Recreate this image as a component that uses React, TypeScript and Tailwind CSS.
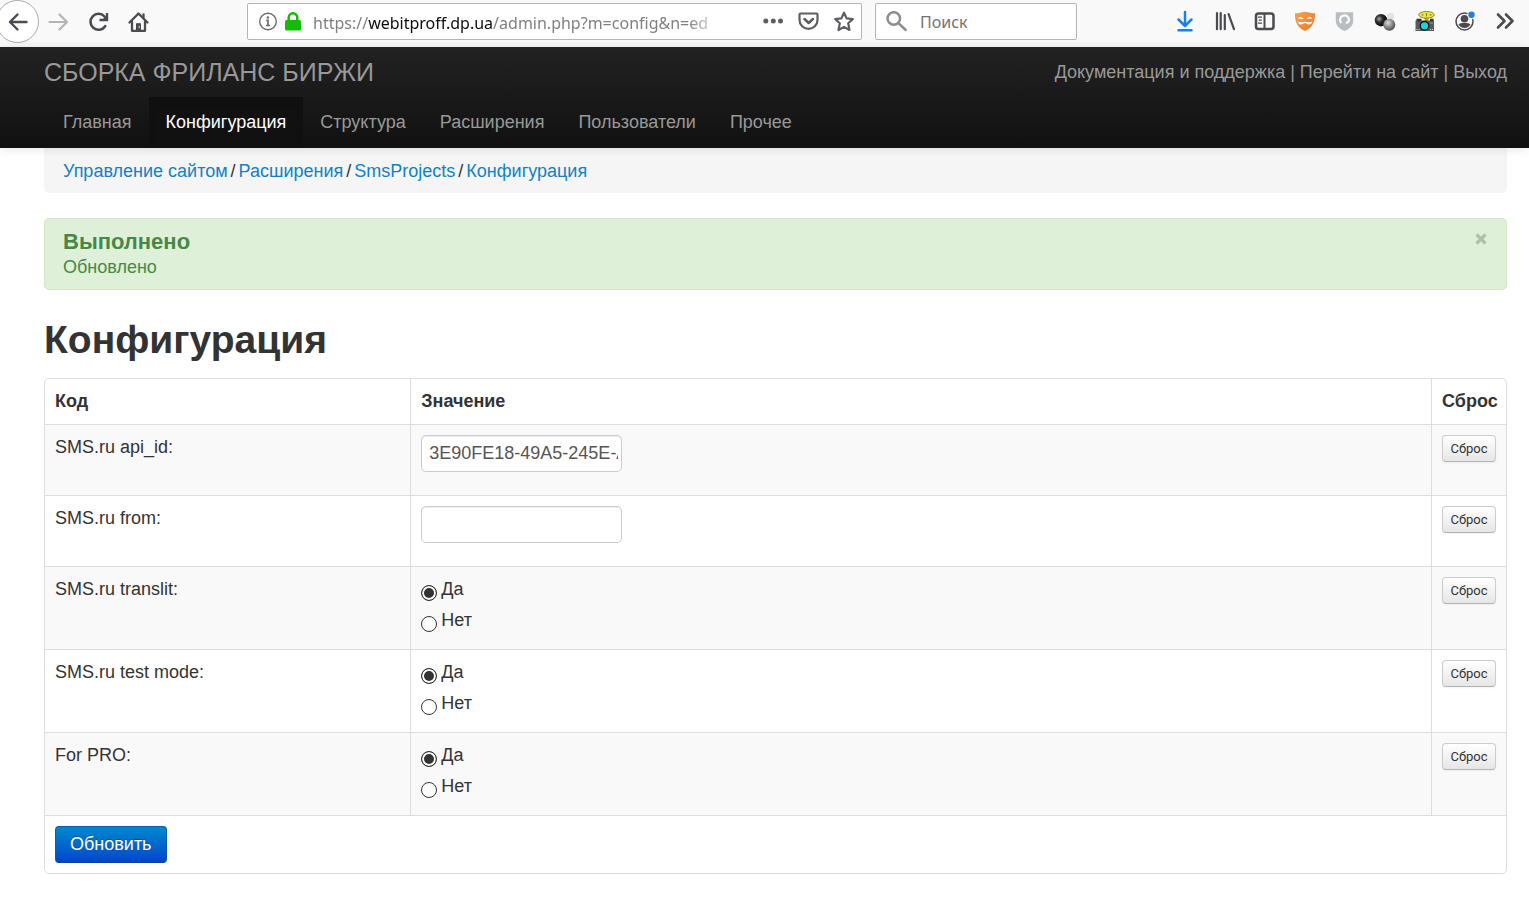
import React from "react";

const iconBox = "block size-6 shrink-0";

function NavButton({ label, children, className = "" }: { label: string; children: React.ReactNode; className?: string }) {
  return (
    <button type="button" aria-label={label} className={`flex size-10 shrink-0 items-center justify-center ${className}`}>
      {children}
    </button>
  );
}

function BackIcon() {
  return (
    <svg viewBox="0 0 24 24" className={iconBox} fill="none" stroke="#4a4a4f" strokeWidth="2.4" strokeLinecap="round" strokeLinejoin="round">
      <path d="M20.500 12H4M11.500 4.500 4 12l7.500 7.500" />
    </svg>
  );
}

function ForwardIcon() {
  return (
    <svg viewBox="0 0 24 24" className={iconBox} fill="none" stroke="#b4b4b6" strokeWidth="2.2" strokeLinecap="round" strokeLinejoin="round">
      <path d="M2.500 12h17M12.500 4.500l7.500 7.500-7.500 7.500" />
    </svg>
  );
}

function ReloadIcon() {
  return (
    <svg viewBox="0 0 24 24" className={iconBox} fill="none" stroke="#4a4a4f" strokeWidth="2.600">
      <path d="M18.200 16.200A8 8 0 1 1 17.500 6.500" strokeLinecap="round" />
      <path d="M20 3v7h-7.500" strokeWidth="2.400" />
      <path d="M20 5v5h-5z" fill="#4a4a4f" stroke="none" />
    </svg>
  );
}

function HomeIcon() {
  return (
    <svg viewBox="0 0 24 24" className={iconBox} fill="none" stroke="#4a4a4f" strokeLinecap="round" strokeLinejoin="round">
      <path d="M2.500 12.500 11.500 3.500l9 9" strokeWidth="2.300" />
      <path d="M5 11.500v9.300h13v-9.300" strokeWidth="2.300" />
      <path d="M16.500 4.500v3" strokeWidth="2.300" />
      <path d="M9.500 20.500v-6.800h4v6.800z" fill="#4a4a4f" strokeWidth="1" />
      <path d="M12.200 16.200v1.600" stroke="#ddd" strokeWidth="1" />
    </svg>
  );
}

function InfoIcon() {
  return (
    <svg viewBox="0 0 20 20" className="block size-5" fill="none" stroke="#6b6b6e">
      <circle cx="10" cy="9.500" r="8.300" strokeWidth="1.400" />
      <path d="M8.200 8.300H10v5M8 13.500h4.200" strokeWidth="1.700" />
      <circle cx="9.900" cy="5.500" r="1.200" fill="#6b6b6e" stroke="none" />
    </svg>
  );
}

function LockIcon() {
  return (
    <svg viewBox="0 0 18 20" className="block h-5 w-[18px]">
      <path d="M4.700 10V5.600a4.300 4.300 0 0 1 8.600 0V10" fill="none" stroke="#12bc00" strokeWidth="2.500" />
      <rect x="1" y="8" width="16" height="10.500" rx="1.500" fill="#12bc00" />
    </svg>
  );
}

function DotsIcon() {
  return (
    <svg viewBox="0 0 20 20" className="block size-5" fill="#5f5f63">
      <circle cx="2.800" cy="9" r="2.500" />
      <circle cx="10.300" cy="9" r="2.500" />
      <circle cx="17.500" cy="9" r="2.500" />
    </svg>
  );
}

function PocketIcon() {
  return (
    <svg viewBox="0 0 22 20" className="block h-5 w-[22px]" fill="none" stroke="#5f5f63" strokeWidth="2.200" strokeLinecap="round" strokeLinejoin="round">
      <path d="M3.500 1.500h16a1 1 0 0 1 1 1v5.500a9 8.800 0 0 1-18 0V2.500a1 1 0 0 1 1-1z" />
      <path d="m7.500 7 4.200 4 4.200-4" strokeWidth="2.500" />
    </svg>
  );
}

function StarIcon() {
  return (
    <svg viewBox="0 0 22 22" className="block size-[22px]" fill="none" stroke="#5f5f63" strokeWidth="2.200" strokeLinejoin="round">
      <path d="m11 1.700 2.600 5.700 6.200.7-4.600 4.200 1.300 6.700L11 15.900l-5.500 3.100 1.300-6.700L2.200 8.100l6.200-.7z" />
    </svg>
  );
}

function SearchIcon() {
  return (
    <svg viewBox="0 0 22 22" className="block size-[22px] shrink-0" fill="none" stroke="#8d8d8f" strokeWidth="2.500" strokeLinecap="round">
      <circle cx="7.800" cy="7.500" r="6.300" />
      <path d="m12.700 12.300 7 6.700" />
    </svg>
  );
}

function DownloadIcon() {
  return (
    <svg viewBox="0 0 24 24" className={iconBox} fill="none" stroke="#1583e9" strokeWidth="2.500" strokeLinecap="round" strokeLinejoin="round">
      <path d="M12 3v13.500M5.500 10.500 12 17l6.500-6.500M5.500 21.300h13" />
    </svg>
  );
}

function LibraryIcon() {
  return (
    <svg viewBox="0 0 24 24" className={iconBox} fill="none" stroke="#4a4a4f" strokeWidth="2.200" strokeLinecap="round">
      <path d="M4 4.200v16M7.700 4.200v16M11.800 6.200v14M15.600 5.200l5.400 15" />
    </svg>
  );
}

function SidebarIcon() {
  return (
    <svg viewBox="0 0 24 24" className={iconBox} fill="none" stroke="#4a4a4f" strokeWidth="2.500">
      <rect x="3" y="4.500" width="17.500" height="15.500" rx="2.500" />
      <path d="M11.500 4.500v15.500" strokeWidth="2" />
      <path d="M5 8.200h4M5.800 11.200h3M5 14.200h4" strokeWidth="1.200" />
    </svg>
  );
}

function FoxMaskIcon() {
  return (
    <svg viewBox="0 0 24 24" className={iconBox}>
      <defs>
        <linearGradient id="maskFill" x1="0" y1="0" x2="1" y2="1">
          <stop offset="0" stopColor="#f6a44f" />
          <stop offset="1" stopColor="#e8792e" />
        </linearGradient>
      </defs>
      <path d="M2 4c4 .8 6.500-1.200 10-1.200S18 4.800 22 4c.500 9-3 15.200-10 18C5 19.200 1.500 13 2 4z" fill="url(#maskFill)" />
      <path d="M4.800 9.800c.8-2.600 4.200-2.600 5.700.5-2-.9-3.900-1-5.700-.5zM19.200 9.800c-.8-2.600-4.200-2.600-5.700.5 2-.9 3.900-1 5.700-.5z" fill="#fff" />
      <path d="M4.500 12c1.600 1.900 4.300 1.500 7.500.7 3.200.8 5.900 1.200 7.500-.7-.5 3.200-3.500 4.500-5.700 2.700l-1.800-.8-1.800.8C8 16.500 5 15.200 4.500 12z" fill="#fff" />
    </svg>
  );
}

function ShieldIcon() {
  return (
    <svg viewBox="0 0 24 24" className={iconBox}>
      <path d="M2.800 3.200h17.400V12c0 4.500-4.200 8.500-8.700 10-4.500-1.500-8.700-5.500-8.700-10z" fill="#b9bcc3" />
      <path d="M8.300 14a4.500 4.500 0 1 1 7.700-3.200c0 1.800-1.200 3-3.200 2.800" fill="none" stroke="#fff" strokeWidth="2.200" />
    </svg>
  );
}

function SpheresIcon() {
  return (
    <svg viewBox="0 0 24 24" className={iconBox}>
      <defs>
        <radialGradient id="sphereDark" cx="0.350" cy="0.400" r="0.650">
          <stop offset="0" stopColor="#aaa" />
          <stop offset="0.400" stopColor="#333" />
          <stop offset="1" stopColor="#000" />
        </radialGradient>
        <radialGradient id="sphereGrey" cx="0.400" cy="0.350" r="0.700">
          <stop offset="0" stopColor="#ddd" />
          <stop offset="0.500" stopColor="#8d8d8d" />
          <stop offset="1" stopColor="#444" />
        </radialGradient>
      </defs>
      <circle cx="17.500" cy="7.500" r="3.800" fill="#e3e3e3" />
      <circle cx="8" cy="11.200" r="6.200" fill="url(#sphereDark)" />
      <circle cx="16.300" cy="15.700" r="6" fill="url(#sphereGrey)" />
    </svg>
  );
}

function CameraIcon() {
  return (
    <svg viewBox="0 0 24 24" className={iconBox}>
      <path d="M11 8h5l-1 4h-3z" fill="#c9a400" />
      <rect x="2.500" y="11.500" width="18.500" height="10.500" fill="#565b5e" />
      <path d="M3.500 9.800h5v2.500h-5zM17 9.800h3.500v2.500H17z" fill="#333" />
      <ellipse cx="13.500" cy="5.800" rx="7.800" ry="3.300" fill="#eee94a" stroke="#8b8720" strokeWidth="1" />
      <path d="M8.500 5.800h2M16.500 5.800h2M13.500 4v3.500" stroke="#8b8720" strokeWidth="1.200" />
      <circle cx="11.500" cy="16.800" r="4.300" fill="#19d7d8" stroke="#111" strokeWidth="1.300" />
      <path d="M3.500 20.500h3M17 20.500h3M17.500 14h2.500" stroke="#ddd" strokeWidth="1" strokeDasharray="1 1" />
    </svg>
  );
}

function AccountIcon() {
  return (
    <svg viewBox="0 0 24 24" className={iconBox}>
      <circle cx="11.500" cy="12.500" r="8.500" fill="none" stroke="#4a4a4f" strokeWidth="1.500" />
      <circle cx="11.500" cy="9.800" r="3.800" fill="#4a4a4f" />
      <path d="M5.500 15.500c1-1.500 3-1.500 6-1.500s5 0 6 1.500c-1.500 2.500-3.800 3.500-6 3.500s-4.500-1-6-3.500z" fill="#4a4a4f" />
      <circle cx="18.500" cy="5.700" r="4.200" fill="#f9f9fa" />
      <circle cx="18.500" cy="5.700" r="3.200" fill="#2080e0" />
    </svg>
  );
}

function ChevronsIcon() {
  return (
    <svg viewBox="0 0 24 24" className={iconBox} fill="none" stroke="#4a4a4f" strokeWidth="2.600" strokeLinecap="round" strokeLinejoin="round">
      <path d="m5 5.500 6.500 6.500L5 18.500M13 5.500l6.500 6.500-6.500 6.500" />
    </svg>
  );
}

const extensions = [
  { label: "Загрузки", Icon: DownloadIcon },
  { label: "Библиотека", Icon: LibraryIcon },
  { label: "Боковые панели", Icon: SidebarIcon },
  { label: "Маска", Icon: FoxMaskIcon },
  { label: "Защита", Icon: ShieldIcon },
  { label: "Сферы", Icon: SpheresIcon },
  { label: "Снимок экрана", Icon: CameraIcon },
  { label: "Аккаунт", Icon: AccountIcon },
  { label: "Другие инструменты", Icon: ChevronsIcon },
];

function BrowserBar() {
  return (
    <div className="flex h-[47px] items-start bg-[#f9f9fa] pr-1 font-['Noto_Sans',sans-serif]">
      <div className="-ml-1 flex h-[43px] w-[251px] shrink-0 items-center">
        <NavButton label="Назад" className="size-[43px] rounded-full border border-[#a9a9ab] bg-white">
          <BackIcon />
        </NavButton>
        <NavButton label="Вперёд"><ForwardIcon /></NavButton>
        <NavButton label="Обновить страницу"><ReloadIcon /></NavButton>
        <NavButton label="Домой"><HomeIcon /></NavButton>
      </div>
      <div className="mt-[3px] flex h-[37px] w-[615px] items-center rounded-xs border border-[#b5b5b7] bg-white pr-1.5 pl-2.5">
        <InfoIcon />
        <span className="ml-1.5"><LockIcon /></span>
        <div className="ml-[11px] flex-1 overflow-hidden pt-0.5 text-base whitespace-nowrap text-[#808082] [mask-image:linear-gradient(to_right,black_375px,transparent_410px)]">
          https://<span className="text-[#0c0c0d]">webitproff.dp.ua</span>/admin.php?m=config&amp;n=ed
        </div>
        <div className="ml-4 flex shrink-0 items-center gap-3.5">
          <button type="button" aria-label="Действия"><DotsIcon /></button>
          <button type="button" aria-label="Сохранить в Pocket"><PocketIcon /></button>
          <button type="button" aria-label="Добавить в закладки"><StarIcon /></button>
        </div>
      </div>
      <label className="mt-[3px] ml-[13px] flex h-[37px] w-[202px] items-center gap-3 rounded-xs border border-[#b5b5b7] bg-white px-2.5">
        <SearchIcon />
        <input type="search" aria-label="Поиск" placeholder="Поиск" className="w-full min-w-0 text-base outline-none placeholder:text-[#737373]" />
      </label>
      <div className="ml-auto flex h-[42px] items-center">
        {extensions.map(({ label, Icon }) => (
          <NavButton key={label} label={label}><Icon /></NavButton>
        ))}
      </div>
    </div>
  );
}

const menu = ["Главная", "Конфигурация", "Структура", "Расширения", "Пользователи", "Прочее"];

function SiteHeader() {
  return (
    <header className="relative h-[101px] bg-linear-to-b from-[#222] to-[#111] pr-[22px] pl-[44px] text-[#999] shadow-[0_1px_10px_rgba(0,0,0,0.1)]">
      <div className="flex h-[50px] items-center justify-between">
        <a href="#" className="text-[25px] [text-shadow:0_-1px_0_rgba(0,0,0,0.25)]">СБОРКА ФРИЛАНС БИРЖИ</a>
        <p>
          <a href="#">Документация и поддержка</a> | <a href="#">Перейти на сайт</a> | <a href="#">Выход</a>
        </p>
      </div>
      <nav className="flex h-[51px] pl-0.5">
        {menu.map((item) => (
          <a
            key={item}
            href="#"
            className={
              item === "Конфигурация"
                ? "flex items-center bg-[#111] px-[17px] text-white shadow-[inset_0_3px_8px_rgba(0,0,0,0.125)]"
                : "flex items-center px-[17px]"
            }
          >
            {item}
          </a>
        ))}
      </nav>
    </header>
  );
}

const crumbs = ["Управление сайтом", "Расширения", "SmsProjects", "Конфигурация"];

function Breadcrumbs() {
  return (
    <nav className="flex h-[45px] items-center gap-[3px] rounded-b-[5px] bg-[#f5f5f5] px-[19px] pt-0.5">
      {crumbs.map((crumb, i) => (
        <React.Fragment key={crumb}>
          {i > 0 && <span>/</span>}
          <a href="#" className="text-[#0f82c5]">{crumb}</a>
        </React.Fragment>
      ))}
    </nav>
  );
}

function SuccessAlert() {
  return (
    <div role="status" className="mt-[25px] flex h-[72px] items-start justify-between rounded-[5px] border border-[#d0e6c4] bg-[#dff0d8] px-[18px] py-2.5 text-[#468847]">
      <div>
        <h4 className="text-[22px] leading-[25px] font-bold">Выполнено</h4>
        <p className="leading-[26px]">Обновлено</p>
      </div>
      <button type="button" aria-label="Закрыть" className="py-1">
        <svg viewBox="0 0 14 12" className="block h-3 w-3.5" fill="none" stroke="#b0c0aa" strokeWidth="3.200">
          <path d="m2.500 1.500 9 9M11.500 1.500l-9 9" />
        </svg>
      </button>
    </div>
  );
}

type Setting = { id: string; label: string; kind: "text" | "radio"; value?: string };

const settings: Setting[] = [
  { id: "api_id", label: "SMS.ru api_id:", kind: "text", value: "3E90FE18-49A5-245E-A" },
  { id: "from", label: "SMS.ru from:", kind: "text", value: "" },
  { id: "translit", label: "SMS.ru translit:", kind: "radio" },
  { id: "test", label: "SMS.ru test mode:", kind: "radio" },
  { id: "pro", label: "For PRO:", kind: "radio" },
];

const radioClass =
  "mt-2 size-4 appearance-none rounded-full border border-[#333] bg-white checked:bg-[#333] checked:shadow-[inset_0_0_0_2px_white]";

function SettingRow({ setting }: { setting: Setting }) {
  const { id, label, kind, value } = setting;
  return (
    <tr className={kind === "text" ? "h-[71px] align-top odd:bg-[#f9f9f9]" : "h-[83px] align-top odd:bg-[#f9f9f9]"}>
      <td className="border-t border-[#ddd] px-2.5 pt-2.5">
        {kind === "text" ? <label htmlFor={id}>{label}</label> : <span id={id}>{label}</span>}
      </td>
      <td className="border-t border-l border-[#ddd] px-2.5 pt-2.5">
        {kind === "text" ? (
          <input
            id={id}
            type="text"
            defaultValue={value}
            className="block h-[37px] w-[201px] rounded-[5px] border border-[#ccc] bg-white pr-[3px] pl-[7px] text-[#555] shadow-[inset_0_1px_1px_rgba(0,0,0,0.075)]"
          />
        ) : (
          <div role="radiogroup" aria-labelledby={id}>
            {["Да", "Нет"].map((option, i) => (
              <label key={option} className="flex h-[31px] items-start gap-1">
                <input type="radio" name={id} defaultChecked={i === 0} className={radioClass} />
                {option}
              </label>
            ))}
          </div>
        )}
      </td>
      <td className="border-t border-l border-[#ddd] px-2.5 pt-2.5">
        <button
          type="button"
          className="block h-[27px] w-full rounded-[4px] border border-[#ccc] border-b-[#b3b3b3] bg-linear-to-b from-white to-[#e6e6e6] font-['Roboto',sans-serif] text-[13px] leading-[25px] text-[#333] shadow-[0_1px_2px_rgba(0,0,0,0.05)]"
        >
          Сброс
        </button>
      </td>
    </tr>
  );
}

export default function App() {
  return (
    <div className="min-h-screen bg-white font-['Liberation_Sans',Arial,sans-serif] text-[18px] leading-[25px] text-[#333]">
      <BrowserBar />
      <SiteHeader />
      <main className="pr-[22px] pl-[44px]">
        <Breadcrumbs />
        <SuccessAlert />
        <h1 className="mt-[25px] mb-[13px] text-[39px] leading-[50px] font-bold">Конфигурация</h1>
        <form>
          <table className="w-full table-fixed border-separate border-spacing-0 overflow-hidden rounded-[5px] border border-[#ddd]">
            <colgroup>
              <col className="w-1/4" />
              <col />
              <col className="w-[75px]" />
            </colgroup>
            <thead>
              <tr className="h-[45px] text-left">
                <th className="px-2.5">Код</th>
                <th className="border-l border-[#ddd] px-2.5">Значение</th>
                <th className="border-l border-[#ddd] px-2.5">Сброс</th>
              </tr>
            </thead>
            <tbody>
              {settings.map((setting) => (
                <SettingRow key={setting.id} setting={setting} />
              ))}
            </tbody>
            <tfoot>
              <tr>
                <td colSpan={3} className="border-t border-[#ddd] p-2.5">
                  <button
                    type="button"
                    className="block h-[37px] rounded-[4px] border border-[#0a5bb5] border-b-[#0a3fa0] bg-linear-to-b from-[#0088cc] to-[#0044cc] px-3.5 text-white [text-shadow:0_-1px_0_rgba(0,0,0,0.25)]"
                  >
                    Обновить
                  </button>
                </td>
              </tr>
            </tfoot>
          </table>
        </form>
      </main>
    </div>
  );
}
